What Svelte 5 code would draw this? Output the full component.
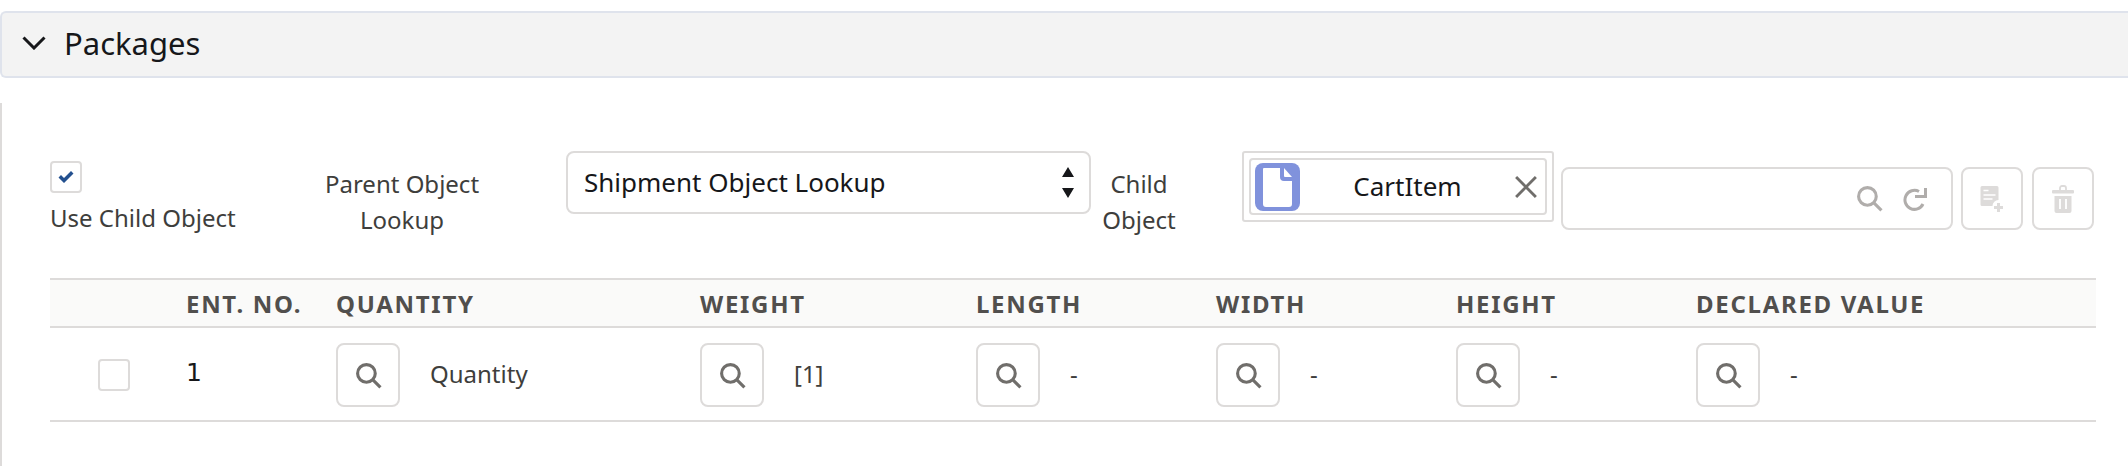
<script lang="ts">
  type Cell = { label: string; value: string; width: number }

  const cells: Cell[] = [
    { label: 'Quantity', value: 'Quantity', width: 364 },
    { label: 'Weight', value: '[1]', width: 276 },
    { label: 'Length', value: '-', width: 240 },
    { label: 'Width', value: '-', width: 240 },
    { label: 'Height', value: '-', width: 240 },
    { label: 'Declared Value', value: '-', width: 340 },
  ]

  let useChild = $state(true)
  let lookup = $state('Shipment Object Lookup')
</script>

{#snippet searchIcon()}
  <svg class="search" viewBox="0 0 26 26" fill="none" stroke="currentColor" stroke-width="3">
    <circle cx="11" cy="11" r="8.5" />
    <path d="M17 17l7.5 7.5" />
  </svg>
{/snippet}

<div class="section-head">
  <svg class="chevron" viewBox="0 0 24 14" fill="none" stroke="#16171a" stroke-width="3">
    <path d="M1.5 1.5L12 12L22.5 1.5" />
  </svg>
  <span>Packages</span>
</div>

<div class="body">
  <div class="options">
    <label class="use-child">
      <input type="checkbox" bind:checked={useChild} />
      <span class="box">
        {#if useChild}
          <svg viewBox="0 0 16 14" fill="#23508f"><path d="M0.5 7.5l2.5-2.5 3 3L13 1l2.500 2.500L6 13z" /></svg>
        {/if}
      </span>
      <span>Use Child Object</span>
    </label>

    <div class="caption parent">Parent Object<br />Lookup</div>

    <div class="select">
      <span>{lookup}</span>
      <svg viewBox="0 0 12 31" fill="#16171a"><path d="M6 0l6 10H0zM6 31L0 21h12z" /></svg>
    </div>

    <div class="caption child">Child<br />Object</div>

    <div class="pill-wrap">
      <div class="pill">
        <span class="pill-icon">
          <svg viewBox="0 0 45 48">
            <path fill="#fff" d="M9 5h16v9a4 4 0 0 0 4 4h8v23a3 3 0 0 1-3 3H11a3 3 0 0 1-3-3V6a1 1 0 0 1 1-1z" />
            <path fill="#fff" d="M29 5l8 9h-7a1 1 0 0 1-1-1z" />
          </svg>
        </span>
        <span class="pill-name">CartItem</span>
        <svg class="pill-x" viewBox="0 0 20 20" stroke="#706e6b" stroke-width="2.600"><path d="M1 1l18 18M19 1L1 19" /></svg>
      </div>
    </div>

    <div class="lookup-input">
      <span class="li-search">{@render searchIcon()}</span>
      <svg class="refresh" viewBox="0 0 24 26" fill="none" stroke="#b0adab" stroke-width="3">
        <path d="M20 18a9.500 9.500 0 1 1-4-12.500" />
        <path d="M22.500 2v8.500H12" />
      </svg>
    </div>

    <button class="icon-btn" aria-label="Add">
      <svg viewBox="0 0 24 28">
        <path fill="#dddbda" d="M2 1h15a1.500 1.500 0 0 1 1.500 1.500V15a6 6 0 0 0-6 6H2a1.500 1.500 0 0 1-1.500-1.500v-17A1.500 1.500 0 0 1 2 1z" />
        <path stroke="#fff" stroke-width="1.600" d="M3.500 5.500h5M3.500 10h12M3.500 14h9" />
        <path stroke="#dddbda" stroke-width="3" d="M18.500 18v9M14 22.500h9" />
      </svg>
    </button>
    <button class="icon-btn" aria-label="Delete">
      <svg viewBox="0 0 22 28">
        <path fill="none" stroke="#dddbda" stroke-width="1.800" d="M8 5V3a2 2 0 0 1 2-2h2a2 2 0 0 1 2 2v2" />
        <path fill="#dddbda" d="M1 5h20a1 1 0 0 1 1 1v1.500a1 1 0 0 1-1 1H1a1 1 0 0 1-1-1V6a1 1 0 0 1 1-1z" />
        <path fill="#dddbda" d="M2.500 11h17v15a2 2 0 0 1-2 2h-13a2 2 0 0 1-2-2z" />
        <path stroke="#fff" stroke-width="1.800" d="M8 14v10M14 14v10" />
      </svg>
    </button>
  </div>

  <div class="table">
    <div class="row head">
      <div class="c-check"></div>
      <div class="c-no">Ent. No.</div>
      {#each cells as cell}
        <div style="width: {cell.width}px">{cell.label}</div>
      {/each}
    </div>
    <div class="row data">
      <div class="c-check"><span class="box empty"></span></div>
      <div class="c-no num">1</div>
      {#each cells as cell}
        <div class="cell" style="width: {cell.width}px">
          <button class="icon-btn dark" aria-label="Search {cell.label}">{@render searchIcon()}</button>
          <span class="value">{cell.value}</span>
        </div>
      {/each}
    </div>
  </div>
</div>

<style>
  :global(body) {
    margin: 0;
    background: #fff;
    font-family: "Noto Sans", "Open Sans", sans-serif;
    color: #3e3e3c;
    overflow: hidden;
  }

  .section-head {
    display: flex;
    align-items: center;
    gap: 18px;
    margin-top: 11px;
    padding: 0 0 3px 20px;
    height: 60px;
    background: #f3f3f3;
    border: 2px solid #dfe3ec;
    border-right: 0;
    border-radius: 6px 0 0 6px;
    font-size: 31px;
    color: #16171a;
  }

  .chevron {
    width: 24px;
    height: 14px;
  }

  .body {
    box-sizing: border-box;
    margin-top: 25px;
    height: 363px;
    padding: 48px 34px 0 48px;
    border-left: 2px solid #dddbda;
  }

  .options {
    display: flex;
    align-items: flex-start;
    height: 127px;
  }

  .use-child {
    display: flex;
    flex-direction: column;
    gap: 8px;
    flex: none;
    width: 267px;
    padding-top: 10px;
    font-size: 24px;
    line-height: 34px;
    color: #3e3e3c;
  }

  .use-child input {
    display: none;
  }

  .box {
    display: flex;
    align-items: center;
    justify-content: center;
    box-sizing: border-box;
    width: 32px;
    height: 32px;
    background: #fff;
    border: 2px solid #dddbda;
    border-radius: 4px;
  }

  .box svg {
    width: 16px;
    height: 14px;
  }

  .caption {
    flex: none;
    font-size: 24px;
    line-height: 36px;
    text-align: center;
    color: #3e3e3c;
  }

  .parent {
    width: 170px;
    padding-top: 15px;
    margin-right: 79px;
  }

  .select {
    display: flex;
    flex: none;
    align-items: center;
    justify-content: space-between;
    box-sizing: border-box;
    width: 525px;
    height: 63px;
    padding: 0 15px 0 16px;
    border: 2px solid #dddbda;
    border-radius: 8px;
    font-size: 26px;
    color: #16171a;
  }

  .select span {
    padding-bottom: 2px;
  }

  .select svg {
    width: 12px;
    height: 31px;
  }

  .child {
    width: 96px;
    padding-top: 15px;
    margin-right: 55px;
  }

  .pill-wrap {
    flex: none;
    box-sizing: border-box;
    width: 312px;
    height: 71px;
    padding: 5px;
    border: 2px solid #dddbda;
    border-radius: 3px;
    margin-right: 7px;
  }

  .pill {
    display: flex;
    align-items: center;
    box-sizing: border-box;
    height: 57px;
    padding: 0 8px 0 4px;
    border: 2px solid #dddbda;
    border-radius: 4px;
  }

  .pill-icon {
    display: flex;
    flex: none;
    width: 45px;
    height: 48px;
    background: #8092dc;
    border-radius: 8px;
  }

  .pill-name {
    flex: 1;
    text-align: center;
    font-size: 26px;
    color: #16171a;
    padding-bottom: 2px;
  }

  .pill-x {
    width: 22px;
    height: 22px;
  }

  .lookup-input {
    display: flex;
    flex: none;
    align-items: center;
    justify-content: flex-end;
    gap: 20px;
    box-sizing: border-box;
    width: 392px;
    height: 63px;
    margin: 16px 8px 0 0;
    padding-right: 24px;
    border: 2px solid #dddbda;
    border-radius: 8px;
  }

  .li-search {
    display: flex;
    color: #b0adab;
  }

  .refresh {
    width: 24px;
    height: 26px;
  }

  .search {
    width: 27px;
    height: 27px;
  }

  .icon-btn {
    display: flex;
    flex: none;
    align-items: center;
    justify-content: center;
    box-sizing: border-box;
    width: 62px;
    height: 63px;
    margin: 16px 9px 0 0;
    padding: 0;
    background: #fff;
    border: 2px solid #dddbda;
    border-radius: 8px;
  }

  .icon-btn svg:not(.search) {
    width: 24px;
    height: 28px;
  }

  .icon-btn.dark {
    width: 64px;
    height: 64px;
    margin: 0;
    color: #706e6b;
  }

  .table {
    width: 2046px;
  }

  .row {
    display: flex;
    align-items: center;
  }

  .head {
    box-sizing: border-box;
    height: 50px;
    background: #fafaf9;
    border-top: 2px solid #dddbda;
    border-bottom: 2px solid #dddbda;
    font-size: 24px;
    font-weight: 700;
    letter-spacing: 1.7px;
    text-transform: uppercase;
    color: #514f4d;
  }

  .data {
    box-sizing: border-box;
    height: 94px;
    padding-top: 2px;
    border-bottom: 2px solid #dddbda;
  }

  .c-check {
    display: flex;
    flex: none;
    width: 136px;
    padding-left: 48px;
    box-sizing: border-box;
  }

  .c-no {
    flex: none;
    width: 150px;
  }

  .num {
    font-family: "DejaVu Sans", sans-serif;
    font-size: 25px;
    color: #16171a;
    padding-bottom: 6px;
  }

  .cell {
    display: flex;
    align-items: center;
    gap: 30px;
  }

  .value {
    font-size: 24px;
    color: #3e3e3c;
    padding-bottom: 4px;
  }
</style>
